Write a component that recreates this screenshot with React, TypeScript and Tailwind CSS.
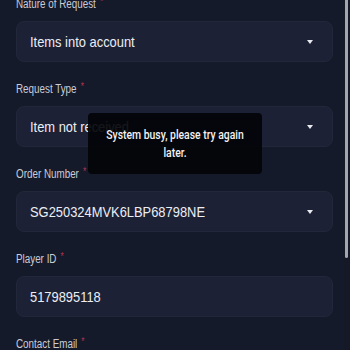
import React from "react";

const Arrow = () => (
  <svg width="6" height="4" viewBox="0 0 6 4" className="shrink-0">
    <path d="M0 0 H6 L3 4 Z" fill="#e8eaf0" />
  </svg>
);

function Field({ label, value, select }: { label: string; value: string; select?: boolean }) {
  return (
    <div className="flex flex-col">
      <div className="h-[14px] flex items-center leading-none">
        <span className="inline-block origin-left scale-x-[0.82] whitespace-nowrap text-[12px] text-[#c9ccd6]">
          {label}
          <span className="ml-[5px] text-[#b8314f] text-[10px] relative -top-[3px]">*</span>
        </span>
      </div>
      <div className="mt-[10px] h-[41px] w-[317px] rounded-[8px] bg-[#1d2135] border border-[#22273a] flex items-center pl-[13px] pr-[19px]">
        <div className="flex-1 min-w-0">
          <span className="inline-block origin-left scale-x-[0.86] whitespace-nowrap text-[15px] text-[#eceef4] leading-none">
            {value}
          </span>
        </div>
        {select && <Arrow />}
      </div>
      <div className="h-[20px]" />
    </div>
  );
}

export default function App() {
  return (
    <div
      className="relative w-[350px] h-[350px] overflow-hidden bg-[#151a2b]"
      style={{ fontFamily: '"Liberation Sans", Arial, sans-serif' }}
    >
      <div className="pl-[16px] -mt-[3px]">
        <Field label="Nature of Request" value="Items into account" select />
        <Field label="Request Type" value="Item not received" select />
        <Field label="Order Number" value="SG250324MVK6LBP68798NE" select />
        <Field label="Player ID" value="5179895118" />
        <Field label="Contact Email" value="" />
      </div>

      {/* scrollbar */}
      <div className="absolute top-0 right-0 w-[6px] h-full bg-[#141827]">
        <div className="ml-[1px] w-[3px] h-[258px] rounded-b-[2px] bg-[#a3a7b2]" />
      </div>

      {/* toast */}
      <div
        className="absolute left-[88px] top-[113px] w-[174px] h-[61px] rounded-[4px] bg-[rgba(3,4,8,0.92)] flex items-center justify-center"
        style={{ fontFamily: '"Roboto", "Noto Sans", sans-serif' }}
      >
        <div className="shrink-0 w-[180px] text-center origin-center scale-x-[0.8] text-[13px] leading-[18px] text-[#f2f3f5] font-medium">
          System busy, please try again later.
        </div>
      </div>
    </div>
  );
}
